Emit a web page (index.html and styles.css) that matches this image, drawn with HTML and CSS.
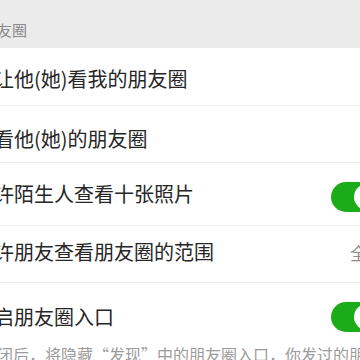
FILE: index.html
```html
<!DOCTYPE html>
<html lang="zh">
<head>
<meta charset="utf-8">
<link rel="stylesheet" href="styles.css">
</head>
<body>
<div class="page">
  <div class="section-title">朋友圈</div>
  <div class="list">
    <div class="row r1"><span class="label">不让他(她)看我的朋友圈</span></div>
    <div class="row r2"><span class="label">不看他(她)的朋友圈</span></div>
    <div class="row r3"><span class="label">允许陌生人查看十张照片</span><span class="switch"><span class="knob"></span></span></div>
    <div class="row r4"><span class="label">允许朋友查看朋友圈的范围</span><span class="value">全部</span></div>
    <div class="row r5 last"><span class="label">开启朋友圈入口</span><span class="switch"><span class="knob"></span></span></div>
  </div>
  <div class="note">关闭后，将隐藏“发现”中的朋友圈入口，你发过的朋友圈仍会展示给朋友。</div>
</div>
</body>
</html>
```
FILE: styles.css
```css
html, body {
  margin: 0;
  padding: 0;
  background: #ffffff;
  overflow: hidden;
  width: 360px;
  height: 360px;
}
.page {
  margin-left: -42px;
  width: 440px;
  font-family: "Noto Sans CJK SC", "Noto Sans", sans-serif;
}
.section-title {
  background: #ebebeb;
  height: 48px;
  box-sizing: border-box;
  padding: 19px 16px 0 24px;
  font-size: 15px;
  line-height: 22px;
  color: #8a8a8a;
}
.list {
  background: #ffffff;
}
.row {
  display: flex;
  align-items: center;
  justify-content: space-between;
  padding: 0 16px;
  height: 57px;
  box-sizing: border-box;
  border-bottom: 1px solid #ececec;
}
.row.r1 { height: 58px; padding-top: 4px; }
.row.r2 { padding-top: 9px; }
.row.r3 { height: 63px; }
.row.r4 { height: 57px; padding-bottom: 4px; }
.row.r5 { height: 60px; padding-top: 8px; border-bottom: none; }
.label {
  font-size: 20px;
  line-height: 26px;
  color: #262626;
  white-space: nowrap;
}
.value {
  font-size: 17px;
  color: #8c8c8c;
  margin-right: -2px;
}
.switch {
  display: flex;
  justify-content: flex-end;
  align-items: center;
  width: 51px;
  height: 30px;
  border-radius: 15px;
  background: #1aad19;
  box-sizing: border-box;
  padding: 1px;
}
.r3 .switch { margin-top: 6px; }
.knob {
  width: 26px;
  height: 26px;
  border-radius: 50%;
  background: #ffffff;
  margin-right: 1px;
}
.note {
  padding: 0 16px 0 23px;
  font-size: 16px;
  line-height: 22px;
  color: #9b9b9b;
  white-space: nowrap;
}
```
